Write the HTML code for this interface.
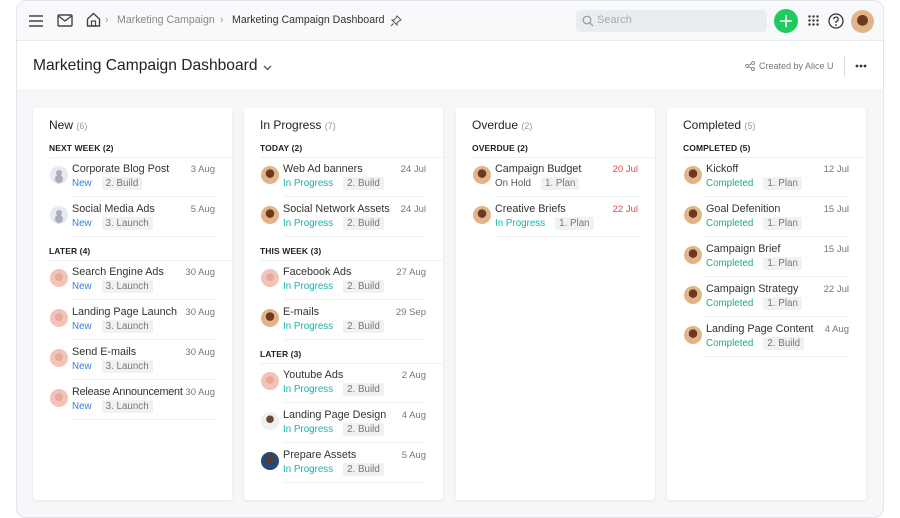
<!DOCTYPE html>
<html><head><meta charset="utf-8"><style>
*{box-sizing:border-box;margin:0;padding:0}
body{width:900px;height:518px;background:#fff;font-family:"Liberation Sans",Arial,sans-serif;color:#333;overflow:hidden;position:relative}
.frame{position:absolute;left:16px;top:0;width:868px;height:518px;border:1px solid #e3e5ea;border-radius:10px;background:#f6f7f9;overflow:hidden}
.top{position:absolute;left:0;top:0;width:100%;height:40px;background:#f8f9fb;border-bottom:1px solid #e8eaee}
.titlebar{position:absolute;left:0;top:40px;width:100%;height:50px;background:#fff;border-bottom:1px solid #eceef1}
.ab{position:absolute}
.crumb{font-size:10.6px;top:13px;white-space:nowrap}
.col{position:absolute;top:108px;width:199px;height:392px;background:#fff;border-radius:3px;box-shadow:0 1px 3px rgba(0,0,0,.08);padding-left:16px}
.ch{height:30px;padding-top:10px;font-size:12px;color:#222}
.ch span{font-size:9px;color:#999}
.sec{height:20px;line-height:20px;font-size:8.5px;font-weight:bold;color:#222;border-bottom:1px solid #eef0f2;letter-spacing:.1px}
.sec.m{margin-top:3px}
.row{height:40px;position:relative}
.row .t{position:absolute;left:23px;top:5px;font-size:10.8px;color:#333;white-space:nowrap}
.row .d{position:absolute;right:17px;top:6px;font-size:9.5px;color:#777}
.row .d.r{color:#e5484d}
.row .s{position:absolute;left:23px;top:20px;font-size:9.8px;white-space:nowrap}
.row .s b{font-weight:normal;margin-right:10px}
.row .s i{font-style:normal;background:#f0f1f3;color:#777;padding:1px 4px;border-radius:2px}
.row:after{content:"";position:absolute;left:23px;right:17px;bottom:1px;height:1px;background:#eef0f2}
.av{position:absolute;left:1px;top:8px;width:18px;height:18px;border-radius:50%;overflow:hidden}
.ph{background:#e8eaf0}
.ph:after{content:"";position:absolute;left:6px;top:4px;width:6px;height:6px;border-radius:50%;background:#a8adb9;box-shadow:0 6px 0 1px #a8adb9}
.m1{background:radial-gradient(circle at 50% 42%,#6b3a22 0 30%,#e2b48a 32%)}
.w1{background:radial-gradient(circle at 50% 45%,#e7a79a 0 28%,#f2c3b8 30%)}
.k1{background:radial-gradient(circle at 50% 40%,#6a4a36 0 26%,#f0f0f0 28% 60%,#eee 62%)}
.k2{background:radial-gradient(circle at 50% 40%,#5a3a2a 0 26%,#274a74 28%)}
.n{color:#2f7fe8}.p{color:#17b3a8}.c{color:#1faa72}.h{color:#555}
</style></head><body>
<div class="frame">
 <div class="top">
  <svg class="ab" style="left:11px;top:13px" width="16" height="14" viewBox="0 0 16 14"><path d="M1 2h14M1 7h14M1 12h14" stroke="#444" stroke-width="1.5"/></svg>
  <svg class="ab" style="left:40px;top:13px" width="16" height="13" viewBox="0 0 16 13"><rect x="1" y="1" width="14" height="11" rx="1" fill="none" stroke="#444" stroke-width="1.4"/><path d="M1.5 2l6.5 5 6.5-5" fill="none" stroke="#444" stroke-width="1.4"/></svg>
  <svg class="ab" style="left:69px;top:11px" width="15" height="15" viewBox="0 0 15 15"><path d="M1.5 7L7.5 1.5 13.5 7V14H1.5Z" fill="none" stroke="#444" stroke-width="1.4"/><rect x="5.5" y="9" width="4" height="5" fill="none" stroke="#444" stroke-width="1.2"/></svg>
  <div class="ab crumb" style="left:88px;color:#999">›</div>
  <div class="ab crumb" style="left:100px;color:#888">Marketing Campaign</div>
  <div class="ab crumb" style="left:203px;color:#999">›</div>
  <div class="ab crumb" style="left:215px;color:#333">Marketing Campaign Dashboard</div>
  <svg class="ab" style="left:373px;top:14px" width="12" height="12" viewBox="0 0 12 12"><path d="M7 1l4 4-2 1-2 2 0 2-5-5 2 0 2-2z M3.5 8.5L1 11" fill="none" stroke="#555" stroke-width="1"/></svg>
  <div class="ab" style="left:559px;top:9px;width:191px;height:22px;background:#e9ecf1;border-radius:4px"></div>
  <svg class="ab" style="left:565px;top:14px" width="12" height="12" viewBox="0 0 12 12"><circle cx="5" cy="5" r="3.8" fill="none" stroke="#999" stroke-width="1.2"/><path d="M8 8l3 3" stroke="#999" stroke-width="1.2"/></svg>
  <div class="ab" style="left:580px;top:13px;font-size:11px;color:#aaa">Search</div>
  <div class="ab" style="left:757px;top:8px;width:24px;height:24px;border-radius:50%;background:#1fcb5f"></div>
  <svg class="ab" style="left:763px;top:14px" width="12" height="12" viewBox="0 0 12 12"><path d="M6 0v12M0 6h12" stroke="#fff" stroke-width="1.6"/></svg>
  <svg class="ab" style="left:791px;top:14px" width="11" height="11" viewBox="0 0 11 11" fill="#333"><circle cx="1.5" cy="1.5" r="1.2"/><circle cx="5.5" cy="1.5" r="1.2"/><circle cx="9.5" cy="1.5" r="1.2"/><circle cx="1.5" cy="5.5" r="1.2"/><circle cx="5.5" cy="5.5" r="1.2"/><circle cx="9.5" cy="5.5" r="1.2"/><circle cx="1.5" cy="9.5" r="1.2"/><circle cx="5.5" cy="9.5" r="1.2"/><circle cx="9.5" cy="9.5" r="1.2"/></svg>
  <svg class="ab" style="left:811px;top:12px" width="16" height="16" viewBox="0 0 16 16"><circle cx="8" cy="8" r="7" fill="none" stroke="#333" stroke-width="1.3"/><path d="M5.8 6.2a2.2 2.2 0 1 1 2.2 2.2v1.5" fill="none" stroke="#333" stroke-width="1.3"/><circle cx="8" cy="12" r=".9" fill="#333"/></svg>
  <div class="ab" style="left:834px;top:9px;width:23px;height:23px;border-radius:50%;background:radial-gradient(circle at 50% 45%,#6b3a22 0 30%,#e2b48a 33%)"></div>
 </div>
 <div class="titlebar">
  <div class="ab" style="left:16px;top:16px;font-size:15.6px;color:#222">Marketing Campaign Dashboard</div>
  <svg class="ab" style="left:246px;top:24px" width="9" height="6" viewBox="0 0 9 6"><path d="M1 1l3.5 3.5L8 1" fill="none" stroke="#555" stroke-width="1.3"/></svg>
  <svg class="ab" style="left:728px;top:20px" width="10" height="10" viewBox="0 0 10 10" fill="none" stroke="#888" stroke-width=".9"><circle cx="2" cy="5" r="1.5"/><circle cx="8" cy="2" r="1.5"/><circle cx="8" cy="8" r="1.5"/><path d="M3.3 4.3l3.4-1.6M3.3 5.7l3.4 1.6"/></svg>
  <div class="ab" style="left:742px;top:20px;font-size:9px;color:#777">Created by Alice U</div>
  <div class="ab" style="left:827px;top:15px;width:1px;height:21px;background:#ddd"></div>
  <svg class="ab" style="left:838px;top:23px" width="12" height="4" viewBox="0 0 12 4" fill="#333"><circle cx="2" cy="2" r="1.4"/><circle cx="6" cy="2" r="1.4"/><circle cx="10" cy="2" r="1.4"/></svg>
 </div>
</div>

<div class="col" style="left:33px">
 <div class="ch">New <span>(6)</span></div>
 <div class="sec">NEXT WEEK (2)</div>
 <div class="row"><div class="av ph"></div><div class="t">Corporate Blog Post</div><div class="d">3 Aug</div><div class="s"><b class="n">New</b><i>2. Build</i></div></div>
 <div class="row"><div class="av ph"></div><div class="t">Social Media Ads</div><div class="d">5 Aug</div><div class="s"><b class="n">New</b><i>3. Launch</i></div></div>
 <div class="sec m">LATER (4)</div>
 <div class="row"><div class="av w1"></div><div class="t">Search Engine Ads</div><div class="d">30 Aug</div><div class="s"><b class="n">New</b><i>3. Launch</i></div></div>
 <div class="row"><div class="av w1"></div><div class="t">Landing Page Launch</div><div class="d">30 Aug</div><div class="s"><b class="n">New</b><i>3. Launch</i></div></div>
 <div class="row"><div class="av w1"></div><div class="t">Send E-mails</div><div class="d">30 Aug</div><div class="s"><b class="n">New</b><i>3. Launch</i></div></div>
 <div class="row"><div class="av w1"></div><div class="t" style="letter-spacing:-.2px">Release Announcement</div><div class="d">30 Aug</div><div class="s"><b class="n">New</b><i>3. Launch</i></div></div>
</div>

<div class="col" style="left:244px">
 <div class="ch">In Progress <span>(7)</span></div>
 <div class="sec">TODAY (2)</div>
 <div class="row"><div class="av m1"></div><div class="t">Web Ad banners</div><div class="d">24 Jul</div><div class="s"><b class="p">In Progress</b><i>2. Build</i></div></div>
 <div class="row"><div class="av m1"></div><div class="t">Social Network Assets</div><div class="d">24 Jul</div><div class="s"><b class="p">In Progress</b><i>2. Build</i></div></div>
 <div class="sec m">THIS WEEK (3)</div>
 <div class="row"><div class="av w1"></div><div class="t">Facebook Ads</div><div class="d">27 Aug</div><div class="s"><b class="p">In Progress</b><i>2. Build</i></div></div>
 <div class="row"><div class="av m1"></div><div class="t">E-mails</div><div class="d">29 Sep</div><div class="s"><b class="p">In Progress</b><i>2. Build</i></div></div>
 <div class="sec m">LATER (3)</div>
 <div class="row"><div class="av w1"></div><div class="t">Youtube Ads</div><div class="d">2 Aug</div><div class="s"><b class="p">In Progress</b><i>2. Build</i></div></div>
 <div class="row"><div class="av k1"></div><div class="t">Landing Page Design</div><div class="d">4 Aug</div><div class="s"><b class="p">In Progress</b><i>2. Build</i></div></div>
 <div class="row"><div class="av k2"></div><div class="t">Prepare Assets</div><div class="d">5 Aug</div><div class="s"><b class="p">In Progress</b><i>2. Build</i></div></div>
</div>

<div class="col" style="left:456px">
 <div class="ch">Overdue <span>(2)</span></div>
 <div class="sec">OVERDUE (2)</div>
 <div class="row"><div class="av m1"></div><div class="t">Campaign Budget</div><div class="d r">20 Jul</div><div class="s"><b class="h">On Hold</b><i>1. Plan</i></div></div>
 <div class="row"><div class="av m1"></div><div class="t">Creative Briefs</div><div class="d r">22 Jul</div><div class="s"><b class="p">In Progress</b><i>1. Plan</i></div></div>
</div>

<div class="col" style="left:667px">
 <div class="ch">Completed <span>(5)</span></div>
 <div class="sec">COMPLETED (5)</div>
 <div class="row"><div class="av m1"></div><div class="t">Kickoff</div><div class="d">12 Jul</div><div class="s"><b class="c">Completed</b><i>1. Plan</i></div></div>
 <div class="row"><div class="av m1"></div><div class="t">Goal Defenition</div><div class="d">15 Jul</div><div class="s"><b class="c">Completed</b><i>1. Plan</i></div></div>
 <div class="row"><div class="av m1"></div><div class="t">Campaign Brief</div><div class="d">15 Jul</div><div class="s"><b class="c">Completed</b><i>1. Plan</i></div></div>
 <div class="row"><div class="av m1"></div><div class="t">Campaign Strategy</div><div class="d">22 Jul</div><div class="s"><b class="c">Completed</b><i>1. Plan</i></div></div>
 <div class="row"><div class="av m1"></div><div class="t">Landing Page Content</div><div class="d">4 Aug</div><div class="s"><b class="c">Completed</b><i>2. Build</i></div></div>
</div>
</body></html>
